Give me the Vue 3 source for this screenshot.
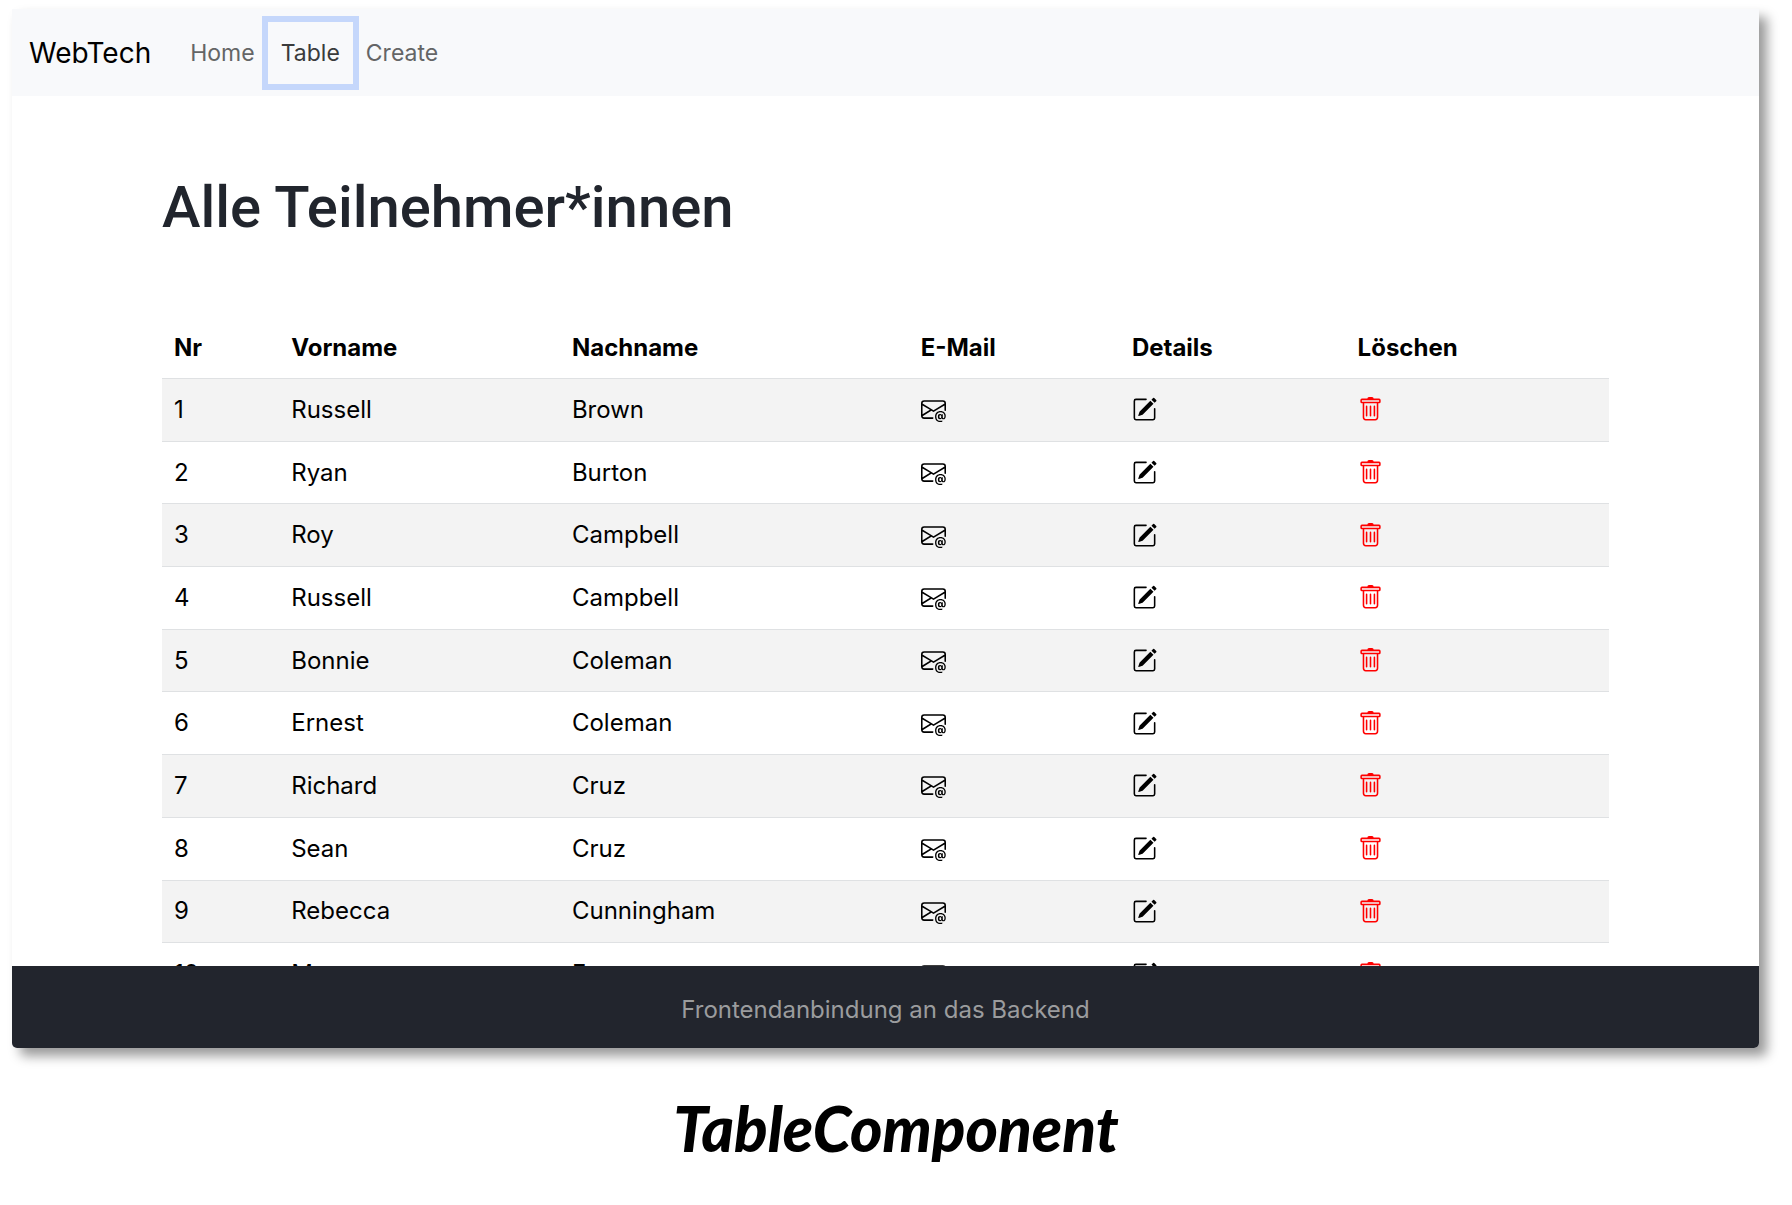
<script setup>
const links = [
  { label: 'Home', active: false },
  { label: 'Table', active: true },
  { label: 'Create', active: false },
]

const members = [
  ['Russell', 'Brown'],
  ['Ryan', 'Burton'],
  ['Roy', 'Campbell'],
  ['Russell', 'Campbell'],
  ['Bonnie', 'Coleman'],
  ['Ernest', 'Coleman'],
  ['Richard', 'Cruz'],
  ['Sean', 'Cruz'],
  ['Rebecca', 'Cunningham'],
  ['Margaret', 'Fox'],
]
</script>

<template>
  <figure class="slide">
    <div class="window">
      <nav class="navbar">
        <a class="brand" href="#">WebTech</a>
        <a
          v-for="link in links"
          :key="link.label"
          class="nav-link"
          :class="{ active: link.active }"
          href="#"
        >{{ link.label }}</a>
      </nav>

      <main class="content">
        <h1>Alle Teilnehmer*innen</h1>
        <table>
          <colgroup>
            <col class="col-nr" />
            <col class="col-first" />
            <col class="col-last" />
            <col class="col-mail" />
            <col class="col-details" />
            <col />
          </colgroup>
          <thead>
            <tr>
              <th scope="col">Nr</th>
              <th scope="col">Vorname</th>
              <th scope="col">Nachname</th>
              <th scope="col">E-Mail</th>
              <th scope="col">Details</th>
              <th scope="col">Löschen</th>
            </tr>
          </thead>
          <tbody>
            <tr v-for="(member, index) in members" :key="index">
              <td>{{ index + 1 }}</td>
              <td>{{ member[0] }}</td>
              <td>{{ member[1] }}</td>
              <td>
                <a class="icon" href="#" aria-label="E-Mail">
                  <svg viewBox="0 0 16 16" fill="currentColor">
                    <path d="M2 2a2 2 0 0 0-2 2v8.01A2 2 0 0 0 2 14h5.5a.5.5 0 0 0 0-1H2a1 1 0 0 1-.966-.741l5.64-3.471L8 9.583l7-4.2V8.5a.5.5 0 0 0 1 0V4a2 2 0 0 0-2-2zm3.708 6.208L1 11.105V5.383zM1 4.217V4a1 1 0 0 1 1-1h12a1 1 0 0 1 1 1v.217l-7 4.2z" />
                    <path d="M14.247 14.269c1.01 0 1.587-.857 1.587-2.025v-.21C15.834 10.43 14.64 9 12.52 9h-.035C10.42 9 9 10.36 9 12.432v.214C9 14.82 10.438 16 12.358 16h.044c.594 0 1.018-.074 1.237-.175v-.73c-.245.11-.673.18-1.18.18h-.044c-1.334 0-2.571-.788-2.571-2.655v-.157c0-1.657 1.058-2.724 2.64-2.724h.04c1.535 0 2.484 1.05 2.484 2.326v.118c0 .975-.324 1.39-.639 1.39-.232 0-.41-.148-.41-.42v-2.19h-.906v.569h-.03c-.084-.298-.368-.63-.954-.63-.778 0-1.259.555-1.259 1.4v.528c0 .892.49 1.434 1.26 1.434.471 0 .896-.227 1.014-.643h.043c.118.42.617.648 1.12.648m-2.453-1.588v-.227c0-.546.227-.791.573-.791.297 0 .572.192.572.708v.367c0 .573-.253.744-.564.744-.354 0-.581-.215-.581-.8Z" />
                  </svg>
                </a>
              </td>
              <td>
                <a class="icon" href="#" aria-label="Details">
                  <svg viewBox="0 0 16 16" fill="currentColor">
                    <path d="M15.502 1.94a.5.5 0 0 1 0 .706L14.459 3.69l-2-2L13.502.646a.5.5 0 0 1 .707 0l1.293 1.293zm-1.75 2.456-2-2L4.939 9.21a.5.5 0 0 0-.121.196l-.805 2.414a.25.25 0 0 0 .316.316l2.414-.805a.5.5 0 0 0 .196-.12l6.813-6.814z" />
                    <path fill-rule="evenodd" d="M1 13.5A1.5 1.5 0 0 0 2.5 15h11a1.5 1.5 0 0 0 1.5-1.5v-6a.5.5 0 0 0-1 0v6a.5.5 0 0 1-.5.5h-11a.5.5 0 0 1-.5-.5v-11a.5.5 0 0 1 .5-.5H9a.5.5 0 0 0 0-1H2.5A1.5 1.5 0 0 0 1 2.5z" />
                  </svg>
                </a>
              </td>
              <td>
                <button class="icon delete" type="button" aria-label="Löschen">
                  <svg viewBox="0 0 16 16" fill="currentColor">
                    <path d="M5.5 5.5A.5.5 0 0 1 6 6v6a.5.5 0 0 1-1 0V6a.5.5 0 0 1 .5-.5m2.5 0a.5.5 0 0 1 .5.5v6a.5.5 0 0 1-1 0V6a.5.5 0 0 1 .5-.5m3 .5a.5.5 0 0 0-1 0v6a.5.5 0 0 0 1 0z" />
                    <path d="M14.5 3a1 1 0 0 1-1 1H13v9a2 2 0 0 1-2 2H5a2 2 0 0 1-2-2V4h-.5a1 1 0 0 1-1-1V2a1 1 0 0 1 1-1H6a1 1 0 0 1 1-1h2a1 1 0 0 1 1 1h3.5a1 1 0 0 1 1 1zM4.118 4 4 4.059V13a1 1 0 0 0 1 1h6a1 1 0 0 0 1-1V4.059L11.882 4zM2.5 3h11V2h-11z" />
                  </svg>
                </button>
              </td>
            </tr>
          </tbody>
        </table>
      </main>

      <footer class="footer">Frontendanbindung an das Backend</footer>
    </div>
    <figcaption>TableComponent</figcaption>
  </figure>
</template>

<style>
body {
  margin: 0;
  background: #fff;
}
</style>

<style scoped>
.slide {
  box-sizing: border-box;
  height: 100vh;
  margin: 0;
  padding-top: 9px;
  display: flex;
  flex-direction: column;
  overflow: hidden;
  font-family: Inter, "Liberation Sans", sans-serif;
  font-size: 24px;
  line-height: 36px;
  color: #000;
}

.window {
  flex: 1;
  min-height: 0;
  margin: 0 33px 0 12px;
  display: flex;
  flex-direction: column;
  overflow: hidden;
  background: #fff;
  border-radius: 0 0 5px 5px;
  box-shadow: 8px 8px 12px rgba(0, 0, 0, 0.4);
}

.navbar {
  display: flex;
  align-items: center;
  height: 87px;
  flex: none;
  padding: 0 17px;
  background: #f8f9fb;
}

.brand {
  margin-right: 26px;
  font-size: 28px;
  color: #000;
  text-decoration: none;
}

.nav-link {
  padding: 13px;
  font-size: 23px;
  color: #646566;
  text-decoration: none;
}

.nav-link.active {
  color: #3a3b3c;
  box-shadow: 0 0 0 6px #c5d7fb;
}

.content {
  flex: 1;
  min-height: 0;
  overflow: hidden;
  padding: 74px 150px 0;
}

h1 {
  margin: 0 0 73px;
  font-family: Roboto, Inter, sans-serif;
  font-size: 58px;
  line-height: 75px;
  font-weight: 500;
  color: #21252d;
}

table {
  width: 100%;
  height: 688px;
  table-layout: fixed;
  border-collapse: collapse;
}

.col-nr { width: 8.1%; }
.col-first { width: 19.4%; }
.col-last { width: 24.1%; }
.col-mail { width: 14.6%; }
.col-details { width: 15.6%; }

th,
td {
  padding: 12px;
  text-align: left;
  vertical-align: middle;
  border-bottom: 1px solid #dfe1e3;
}

th {
  font-weight: 700;
}

tbody tr:nth-child(odd) {
  background: #f3f3f3;
}

.icon {
  display: block;
  width: 25px;
  height: 25px;
  padding: 0;
  border: 0;
  background: none;
  color: #000;
}

.icon svg {
  display: block;
  width: 25px;
  height: 25px;
}

.icon.delete {
  color: #f00;
}

.footer {
  flex: none;
  height: 82px;
  display: flex;
  align-items: center;
  justify-content: center;
  padding-top: 6px;
  box-sizing: border-box;
  background: #22252d;
  color: #9b9c9e;
}

figcaption {
  height: 157px;
  box-sizing: border-box;
  padding-top: 44px;
  font-family: Lato, Carlito, sans-serif;
  font-size: 62px;
  line-height: 72px;
  font-weight: 900;
  font-style: italic;
  text-align: center;
}
</style>
